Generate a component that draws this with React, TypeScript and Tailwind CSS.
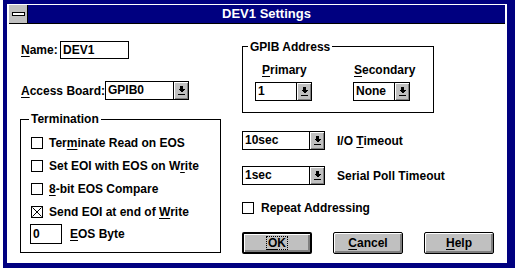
import React from 'react'

const Arrow = () => (
  <svg width="7" height="9" viewBox="0 0 7 9" shapeRendering="crispEdges">
    <rect x="2" y="0" width="3" height="3" fill="#000" />
    <polygon points="0,3 7,3 3.5,6.5" fill="#000" />
    <rect x="0" y="8" width="7" height="1" fill="#000" />
  </svg>
)

function Combo({ value, w }: { value: string; w: string }) {
  return (
    <div className={`flex shrink-0 h-[19px] border border-black bg-white ${w}`}>
      <span className="flex-1 pl-[2px] leading-[17px]">{value}</span>
      <span className="w-[15px] flex items-center justify-center border-l border-black bg-[#c0c0c0] shadow-[inset_1px_1px_0_#fff,inset_-1px_-1px_0_#808080]">
        <Arrow />
      </span>
    </div>
  )
}

function Check({ checked }: { checked?: boolean }) {
  return (
    <span className="block w-[12px] h-[12px] border border-black bg-white flex-shrink-0">
      {checked && (
        <svg width="10" height="10" viewBox="0 0 10 10" className="block">
          <path d="M0.5 0.5L9.5 9.5M9.5 0.5L0.5 9.5" stroke="#000" strokeWidth="1" />
        </svg>
      )}
    </span>
  )
}

function Btn({ children, def }: { children: React.ReactNode; def?: boolean }) {
  return (
    <div
      className={`w-[70px] h-[22px] rounded-[2px] border-black ${def ? 'border-2' : 'border'} bg-[#c0c0c0] flex items-center justify-center shadow-[inset_1px_1px_0_#fff,inset_-2px_-2px_0_#808080]`}
    >
      {children}
    </div>
  )
}

const U = ({ children }: { children: React.ReactNode }) => (
  <span className="underline underline-offset-[2px]">{children}</span>
)

export default function App() {
  return (
    <div className="w-[515px] h-[273px] bg-white font-['Liberation_Sans',Arial,sans-serif] font-bold text-[12px] leading-[14px] text-black whitespace-nowrap">
      <div className="ml-[3px] w-[512px] h-[268px] border-[#000080] border-t-4 border-l-4 border-r-8 border-b-[5px] flex flex-col">
        {/* title bar */}
        <div className="pt-[1px] px-[2px]">
          <div className="flex h-[19px] border-b border-black">
            <div className="w-[19px] border-r border-black bg-[#c0c0c0] flex items-center justify-center">
              <span className="block w-[13px] h-[4px] border border-black bg-white" />
            </div>
            <div className="flex-1 bg-[#000080] text-white text-[13px] flex items-center justify-center">
              DEV1 Settings
            </div>
          </div>
        </div>

        {/* body */}
        <div className="flex pl-[13px]">
          {/* left column */}
          <div className="w-[201px] shrink-0 flex flex-col">
            <div className="mt-[17px] flex items-center h-[18px] ml-[1px]">
              <span className="w-[39px] shrink-0">
                <U>N</U>ame:
              </span>
              <div className="w-[69px] h-[18px] border border-black pl-[2px] leading-[16px]">DEV1</div>
            </div>
            <div className="mt-[22px] flex items-center ml-[1px]">
              <span className="w-[84px] shrink-0">
                <U>A</U>ccess Board:
              </span>
              <Combo value="GPIB0" w="w-[84px]" />
            </div>
            <div className="mt-[19px] relative h-[134px] border border-black pl-[9px] pt-[11px]">
              <span className="absolute -top-[8px] left-[8px] bg-white px-[2px]">Termination</span>
              {[
                <>Ter<U>m</U>inate Read on EOS</>,
                <>Set EOI with EOS on W<U>r</U>ite</>,
                <><U>8</U>-bit EOS Compare</>,
                <>Send EOI at end of <U>W</U>rite</>,
              ].map((label, i) => (
                <div key={i} className="h-[23px] flex items-center gap-[6px] ml-[1px]">
                  <Check checked={i === 3} />
                  <span>{label}</span>
                </div>
              ))}
              <div className="mt-[1px] flex items-center gap-[8px]">
                <div className="w-[32px] h-[20px] border border-black pl-[2px] leading-[18px]">0</div>
                <span>
                  <U>E</U>OS Byte
                </span>
              </div>
            </div>
          </div>

          {/* right column */}
          <div className="ml-[21px] flex flex-col">
            <div className="mt-[22px] relative w-[192px] h-[67px] border border-black pl-[12px]">
              <span className="absolute -top-[7px] left-[5px] bg-white px-[2px]">GPIB Address</span>
              <div className="flex gap-[41px]">
                <div className="flex flex-col">
                  <span className="mt-[16px] ml-[7px]">
                    <U>P</U>rimary
                  </span>
                  <div className="mt-[5px]">
                    <Combo value="1" w="w-[57px]" />
                  </div>
                </div>
                <div className="flex flex-col">
                  <span className="mt-[16px] ml-[1px]">
                    <U>S</U>econdary
                  </span>
                  <div className="mt-[5px]">
                    <Combo value="None" w="w-[57px]" />
                  </div>
                </div>
              </div>
            </div>
            <div className="mt-[18px] flex items-center gap-[12px]">
              <Combo value="10sec" w="w-[83px]" />
              <span>
                I/O <U>T</U>imeout
              </span>
            </div>
            <div className="mt-[16px] flex items-center gap-[12px]">
              <Combo value="1sec" w="w-[83px]" />
              <span>Serial Poll Timeout</span>
            </div>
            <div className="mt-[16px] flex items-center gap-[7px]">
              <Check />
              <span>Repeat Addressing</span>
            </div>
            <div className="mt-[17px] flex gap-[21px]">
              <Btn def>
                <span className="border border-dotted border-black px-[1px] leading-[12px]">
                  <U>O</U>K
                </span>
              </Btn>
              <Btn>
                <span>
                  <U>C</U>ancel
                </span>
              </Btn>
              <Btn>
                <span>
                  <U>H</U>elp
                </span>
              </Btn>
            </div>
          </div>
        </div>
      </div>
    </div>
  )
}
